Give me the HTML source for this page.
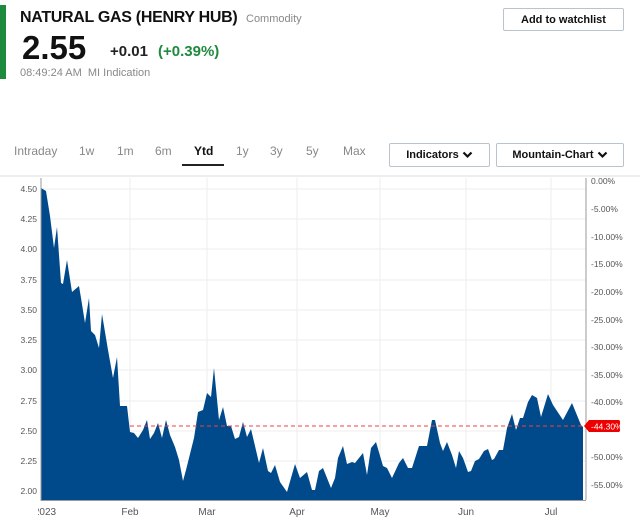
<!DOCTYPE html>
<html><head><meta charset="utf-8"><style>
*{margin:0;padding:0;box-sizing:border-box}
body{width:640px;height:527px;background:#fff;font-family:"Liberation Sans",sans-serif;position:relative;overflow:hidden;color:#111}
.a{position:absolute;white-space:nowrap}
.btn{position:absolute;border:1px solid #b9c3cc;border-radius:2px;font-size:12px;font-weight:bold;color:#111;display:flex;align-items:center;justify-content:center}
.tab{position:absolute;top:144px;font-size:12px;color:#888}
</style></head><body>
<div class="a" style="left:0;top:5px;width:6px;height:74px;background:#1e8a3e"></div>
<div class="a" style="left:20px;top:9px;font-size:16px;font-weight:bold;letter-spacing:-0.3px">NATURAL GAS (HENRY HUB)</div>
<div class="a" style="left:246px;top:13px;font-size:11px;color:#888">Commodity</div>
<div class="a" style="left:22px;top:29px;font-size:33px;font-weight:bold">2.55</div>
<div class="a" style="left:110px;top:43px;font-size:15px;font-weight:bold;color:#222">+0.01</div>
<div class="a" style="left:158px;top:43px;font-size:15px;font-weight:bold;color:#1e8a3e">(+0.39%)</div>
<div class="a" style="left:20px;top:67px;font-size:11px;color:#888">08:49:24 AM&nbsp; MI Indication</div>
<div class="btn" style="left:503px;top:8px;width:121px;height:23px;font-size:11px">Add to watchlist</div>

<div class="tab" style="left:14px">Intraday</div>
<div class="tab" style="left:79px">1w</div>
<div class="tab" style="left:117px">1m</div>
<div class="tab" style="left:155px">6m</div>
<div class="tab" style="left:194px;color:#111;font-weight:bold">Ytd</div>
<div class="tab" style="left:236px">1y</div>
<div class="tab" style="left:270px">3y</div>
<div class="tab" style="left:306px">5y</div>
<div class="tab" style="left:343px">Max</div>
<div class="a" style="left:182px;top:164px;width:42px;height:2px;background:#222"></div>
<div class="btn" style="left:389px;top:143px;width:101px;height:24px;font-size:11px">Indicators&nbsp;<svg width="11" height="8" viewBox="0 0 11 8"><path d="M1.5 1.5L5.5 5.5L9.5 1.5" stroke="#111" stroke-width="2.2" fill="none"/></svg></div>
<div class="btn" style="left:496px;top:143px;width:128px;height:24px;font-size:11px">Mountain-Chart&nbsp;<svg width="11" height="8" viewBox="0 0 11 8"><path d="M1.5 1.5L5.5 5.5L9.5 1.5" stroke="#111" stroke-width="2.2" fill="none"/></svg></div>
<div class="a" style="left:0;top:175px;width:640px;height:2px;background:#eee"></div>

<svg class="a" style="left:0;top:0" width="640" height="527" viewBox="0 0 640 527" font-family="Liberation Sans, sans-serif">
<defs><clipPath id="c"><rect x="38" y="0" width="602" height="527"/></clipPath></defs>
<g stroke="#eee" stroke-width="1">
<line x1="41" x2="586" y1="189" y2="189"/><line x1="41" x2="586" y1="219" y2="219"/><line x1="41" x2="586" y1="249" y2="249"/><line x1="41" x2="586" y1="280" y2="280"/><line x1="41" x2="586" y1="310" y2="310"/><line x1="41" x2="586" y1="340" y2="340"/><line x1="41" x2="586" y1="370" y2="370"/><line x1="41" x2="586" y1="401" y2="401"/><line x1="41" x2="586" y1="431" y2="431"/><line x1="41" x2="586" y1="461" y2="461"/>
<line x1="130" x2="130" y1="178" y2="500"/><line x1="207" x2="207" y1="178" y2="500"/><line x1="297" x2="297" y1="178" y2="500"/><line x1="380" x2="380" y1="178" y2="500"/><line x1="466" x2="466" y1="178" y2="500"/><line x1="551" x2="551" y1="178" y2="500"/>
</g>
<path fill="#004a8c" d="M41 500 L41 188 L46 191 L50 216 L54 248 L57 227 L61 283 L63 284 L67 260 L72 292 L79 286 L81 298 L85 323 L89 298 L91 331 L95 335 L99 348 L102 314 L108 350 L113 378 L117 357 L120 406 L127 406 L130 432 L134 433 L138 438 L143 430 L147 420 L150 439 L154 433 L158 423 L162 438 L166 420 L170 435 L175 447 L179 460 L183 481 L186 470 L194 438 L198 412 L203 410 L207 393 L211 397 L214 368 L219 420 L223 407 L227 426 L231 426 L235 439 L239 437 L243 422 L247 437 L251 429 L259 463 L263 448 L268 471 L271 473 L275 465 L280 482 L287 492 L295 464 L300 478 L307 472 L312 490 L315 490 L319 471 L323 468 L331 488 L335 478 L338 458 L343 446 L347 464 L352 462 L355 463 L363 453 L367 475 L371 448 L376 442 L383 466 L387 468 L392 478 L399 463 L403 458 L408 468 L412 468 L419 446 L427 446 L432 420 L435 420 L440 443 L443 451 L447 442 L452 455 L456 468 L459 451 L463 458 L468 472 L471 471 L475 461 L479 459 L484 451 L488 449 L492 460 L494 459 L499 450 L503 450 L507 428 L512 414 L516 430 L520 418 L523 418 L528 402 L532 395 L537 398 L541 417 L548 394 L553 405 L563 420 L572 403 L581 425 L583 427 L583 500 Z"/>
<line x1="130" x2="586" y1="426" y2="426" stroke="#f04040" stroke-dasharray="4 3" stroke-width="1"/>
<line x1="41" x2="41" y1="178" y2="501" stroke="#999"/>
<line x1="41" x2="586" y1="500.5" y2="500.5" stroke="#999"/>
<line x1="586" x2="586" y1="178" y2="500" stroke="#999"/>
<g font-size="8.5" fill="#555" text-anchor="end">
<text x="37" y="192">4.50</text><text x="37" y="222">4.25</text><text x="37" y="252">4.00</text><text x="37" y="283">3.75</text><text x="37" y="313">3.50</text><text x="37" y="343">3.25</text><text x="37" y="373">3.00</text><text x="37" y="404">2.75</text><text x="37" y="434">2.50</text><text x="37" y="464">2.25</text><text x="37" y="494">2.00</text>
</g>
<g font-size="8.5" fill="#555">
<text x="591" y="184">0.00%</text><text x="591" y="212">-5.00%</text><text x="591" y="240">-10.00%</text><text x="591" y="267">-15.00%</text><text x="591" y="295">-20.00%</text><text x="591" y="323">-25.00%</text><text x="591" y="350">-30.00%</text><text x="591" y="378">-35.00%</text><text x="591" y="405">-40.00%</text><text x="591" y="460">-50.00%</text><text x="591" y="488">-55.00%</text>
</g>
<path d="M584 426 L589 420 L619 420 L620 421 L620 431 L619 432 L589 432 Z" fill="#e00"/>
<text x="591" y="429.5" font-size="8.5" fill="#fff">-44.30%</text>
<g font-size="10" fill="#555" text-anchor="middle">
<text x="45" y="515" clip-path="url(#c)">2023</text><text x="130" y="515">Feb</text><text x="207" y="515">Mar</text><text x="297" y="515">Apr</text><text x="380" y="515">May</text><text x="466" y="515">Jun</text><text x="551" y="515">Jul</text>
</g>
</svg>
</body></html>
